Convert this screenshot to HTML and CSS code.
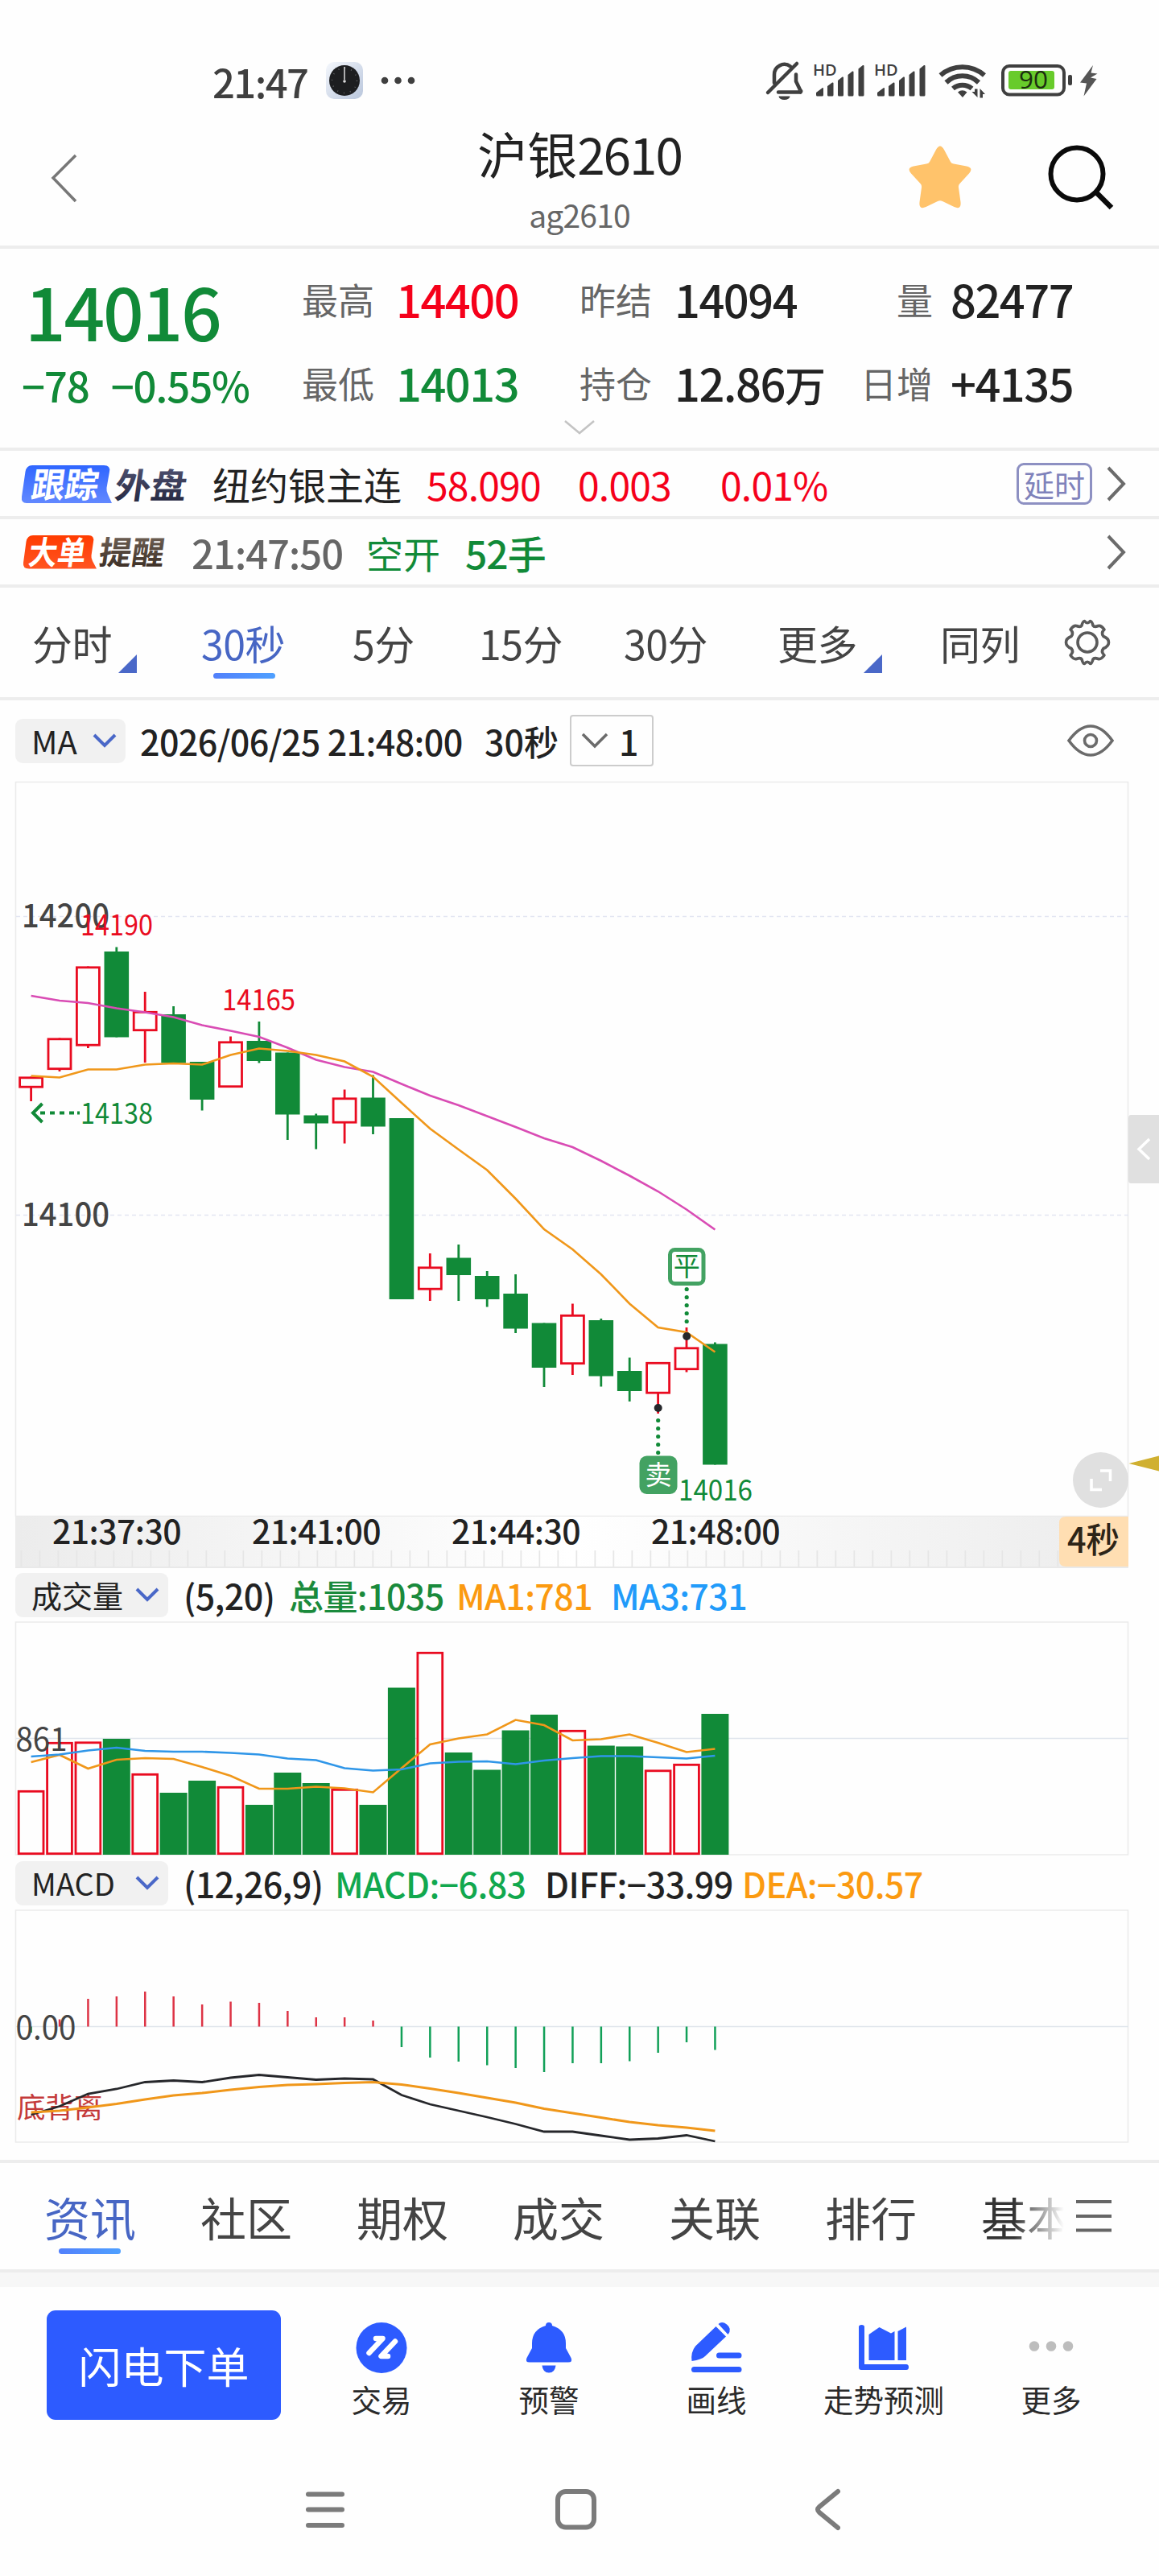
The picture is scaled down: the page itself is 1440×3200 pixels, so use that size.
FILE: index.html
```html
<!DOCTYPE html>
<html lang="zh-CN">
<head>
<meta charset="utf-8">
<title>沪银2610</title>
<link rel="stylesheet" href="styles.css">
</head>
<body>
<div class="phone">
  <div class="status">
    <span class="clock">21:47</span>
    <svg class="dial" width="46" height="46" viewBox="0 0 46 46"><defs><linearGradient id="dialbg" x1="0" y1="0" x2="1" y2="1"><stop offset="0" stop-color="#f4f7fc"/><stop offset="1" stop-color="#b9c6dc"/></linearGradient></defs><rect width="46" height="46" rx="10" fill="url(#dialbg)"/><circle cx="23" cy="23" r="19" fill="#1d1e20"/><circle cx="23" cy="23" r="15.500" fill="none" stroke="#66686b" stroke-width="1.500" stroke-dasharray="1 7.100"/><path d="M23 6V22" stroke="#ddd" stroke-width="1.500"/><circle cx="23" cy="24" r="1.800" fill="#ddd"/></svg>
    <svg class="dots" width="46" height="12" viewBox="0 0 46 12" fill="#3f3f3f"><circle cx="6" cy="6" r="4.300"/><circle cx="22.500" cy="6" r="4.300"/><circle cx="39" cy="6" r="4.300"/></svg>
    <svg class="signals" width="430" height="60" viewBox="945 70 430 60" fill="#3f3f3f">
      <g fill="none" stroke="#3f3f3f" stroke-width="4.500" stroke-linecap="round" stroke-linejoin="round"><path d="M962 103V93a12.500 12.500 0 0 1 20-10.500M989 92.500V101l5.500 11.500a1 1 0 0 1-1 2H967"/><path d="M954 115L990 79"/></g>
      <path d="M967.500 119.500h14a7 4.500 0 0 1-14 0z"/>
      <g id="cell">
        <text x="1010" y="94" class="hd">HD</text>
        <path d="M1014 115l8-6q1-.5 1 1v8q0 1.500-1.500 1.500h-6q-1.500 0-1.500-1.500zM1028 107l6-4.500q1.500-.5 1.500 1v14.500q0 1.500-1.500 1.500h-4.500q-1.500 0-1.500-1.500zM1041 100l5.500-4.500q1.500-.5 1.500 1v21.500q0 1.500-1.500 1.500h-4q-1.500 0-1.500-1.500zM1053.500 93l5.500-4.500q1.500-.5 1.500 1v28.500q0 1.500-1.500 1.500h-4q-1.500 0-1.500-1.500zM1066.500 85.500l5.500-4.500q1.500-.5 1.500 1v36q0 1.500-1.500 1.500h-4q-1.500 0-1.500-1.500z"/>
      </g>
      <use href="#cell" x="76"/>
      <g fill="none" stroke="#3f3f3f" stroke-width="6"><path d="M1168.500 93.500A41 41 0 0 1 1223 93.500"/><path d="M1175.500 102.500A29 29 0 0 1 1216 102.500"/><path d="M1184 110A18 18 0 0 1 1207.500 110"/></g>
      <path d="M1190 114.500Q1195.500 110 1201.500 114.500L1196 121z"/>
      <path d="M1211 110.500h3.500V121l-7-7h3.500zM1217.500 121.500V110l6.500 7h-3v4.500z"/>
      <rect x="1246" y="82" width="76" height="35.500" rx="8" fill="none" stroke="#3f3f3f" stroke-width="4"/>
      <rect x="1253" y="88" width="57" height="23" rx="3" fill="#68cb2b"/>
      <rect x="1327" y="93" width="5" height="13" rx="2"/>
      <text x="1266" y="110" class="pct" textLength="36" lengthAdjust="spacingAndGlyphs">90</text>
      <path d="M1358 81L1342 102.500L1350 103.500L1346.500 119.500L1362.500 98L1355 96.500L1363.500 91.500L1355.500 90.500z" fill="#555"/>
    </svg>
  </div>

  <header class="head">
    <svg class="back" width="40" height="70" viewBox="60 186 40 70" fill="none" stroke="#777" stroke-width="3.500"><path d="M94 193L66 221L94 250"/></svg>
    <div class="title"><h1>沪银<span>2610</span></h1><p>ag2610</p></div>
    <svg width="84" height="84" viewBox="0 0 84 84" class="star"><path d="M37 8Q42-1 47 8l8 15q1 2 4 2.500l16 3q9 2 3 9L66.500 50q-2 2-1.500 5l2.500 18q1 10-8 6L45 72q-3-1.500-6 0l-14.500 7q-9 4-8-6L19 55q.5-3-1.500-5L6 37.500q-6-7 3-9l16-3q3-.5 4-2.500z" fill="#ffc36b"/></svg>
    <svg width="84" height="84" viewBox="1300 178 84 84" class="find" fill="none" stroke="#0a0a0a"><circle cx="1338" cy="216" r="32.500" stroke-width="6"/><path d="M1362 239L1381 258" stroke-width="6.500"/></svg>
  </header>

  <section class="quote">
    <div class="last"><div class="price">14016</div><div class="chg"><span>−78</span><span>−0.55%</span></div></div>
    <div class="stats">
      <label>最高</label><b class="up">14400</b><label>昨结</label><b>14094</b><label class="r">量</label><b class="v">82477</b>
      <label>最低</label><b class="down">14013</b><label>持仓</label><b>12.86<i>万</i></b><label class="r">日增</label><b class="v">+4135</b>
    </div>
    <svg class="more" width="40" height="20" viewBox="0 0 40 20" fill="none" stroke="#c4c4c4" stroke-width="2.500"><path d="M2 2L20 17L38 2"/></svg>
  </section>

  <section class="line track">
    <svg class="badge" width="216" height="56" viewBox="22 572 216 56">
      <defs><linearGradient id="bl" x1="0" y1="0" x2="0" y2="1"><stop offset="0" stop-color="#2f66ff"/><stop offset="1" stop-color="#6288ff"/></linearGradient><linearGradient id="ink" x1="0" y1="0" x2="0" y2="1"><stop offset="0" stop-color="#585a7c"/><stop offset="1" stop-color="#20233a"/></linearGradient></defs>
      <path d="M40 577H129Q137.500 577 136 585L132.500 605Q132 609 134 613L139 624H33Q26 624 27 616L31.500 585Q33 577 40 577z" fill="url(#bl)"/>
      <g class="btxt"><text transform="translate(37.500 616.500) skewX(-8)" fill="#fff" textLength="83" lengthAdjust="spacingAndGlyphs">跟踪</text><text transform="translate(141 617.500) skewX(-8)" fill="url(#ink)" textLength="89" lengthAdjust="spacingAndGlyphs">外盘</text></g>
    </svg>
    <span class="name">纽约银主连</span><span class="q1">58.090</span><span class="q2">0.003</span><span class="q3">0.01%</span>
    <span class="delay">延时</span>
    <svg class="go" width="26" height="44" viewBox="0 0 26 44"><path d="M3 2L22 22L3 42"/></svg>
  </section>

  <section class="line big">
    <svg class="badge" width="216" height="56" viewBox="22 658 216 56">
      <defs><linearGradient id="rd" x1="0" y1="0" x2="0" y2="1"><stop offset="0" stop-color="#ff3c00"/><stop offset="1" stop-color="#ff5422"/></linearGradient><linearGradient id="br" x1="0" y1="0" x2="0" y2="1"><stop offset="0" stop-color="#7b6c60"/><stop offset="1" stop-color="#33261d"/></linearGradient></defs>
      <path d="M41 665H110Q117.500 665 116 673L113.500 690Q113 693 115 697L120 706.500H36Q28 706.500 29 699L32.500 673Q34 665 41 665z" fill="url(#rd)"/>
      <g class="btxt b2"><text transform="translate(34 700.500) skewX(-8)" fill="#fff" textLength="71" lengthAdjust="spacingAndGlyphs">大单</text><text transform="translate(121.500 701) skewX(-8)" fill="url(#br)" textLength="81" lengthAdjust="spacingAndGlyphs">提醒</text></g>
    </svg>
    <span class="at">21:47:50</span><span class="side">空开</span><span class="lots">52手</span>
    <svg class="go" width="26" height="44" viewBox="0 0 26 44"><path d="M3 2L22 22L3 42"/></svg>
  </section>

  <nav class="periods">
    <span class="p1">分时<svg width="23" height="23" viewBox="0 0 23 23"><path d="M23 0V23H0z"/></svg></span>
    <span class="p2 on">30秒</span><span class="p3">5分</span><span class="p4">15分</span><span class="p5">30分</span>
    <span class="p6">更多<svg width="23" height="23" viewBox="0 0 23 23"><path d="M23 0V23H0z"/></svg></span>
    <span class="p7">同列</span>
    <svg class="gear" width="58" height="58" viewBox="-29 -29 58 58" fill="none" stroke="#5a5a5a" stroke-width="3.600" stroke-linejoin="round"><circle r="12"/><path d="M-7-21Q-5.500-26.500-3.500-26.500Q0-22 3.500-26.500Q5.500-26.500 7-21Q8.500-18.500 13.500-20.500Q17-21.500 21-16Q16.500-11.500 20-7.500Q26.500-5 26.500 0Q26.500 5 20 7.500Q16.500 11.500 21 16Q17 21.500 13.500 20.500Q8.500 18.500 7 21Q5.500 26.500 3.500 26.500Q0 22-3.500 26.500Q-5.500 26.500-7 21Q-8.500 18.500-13.500 20.500Q-17 21.500-21 16Q-16.500 11.500-20 7.500Q-26.500 5-26.500 0Q-26.500-5-20-7.500Q-16.500-11.500-21-16Q-17-21.500-13.500-20.500Q-8.500-18.500-7-21z"/></svg>
  </nav>

  <div class="legend main">
    <span class="pill ma">MA<svg width="30" height="18" viewBox="0 0 30 18"><path d="M2 2L15 15L28 2"/></svg></span>
    <span class="stamp">2026/06/25 21:48:00</span><span class="unit">30秒</span>
    <span class="count"><svg width="34" height="20" viewBox="0 0 34 20" fill="none" stroke="#6b6b6b" stroke-width="3.500"><path d="M2 2L17 17L32 2"/></svg>1</span>
    <svg class="eye" width="60" height="44" viewBox="-30 -22 60 44" fill="none" stroke="#6b6b6b" stroke-width="3.600"><path d="M-27 0Q-14-18 0-18Q14-18 27 0Q14 18 0 18Q-14 18-27 0z"/><circle r="7.500"/></svg>
  </div>

  <svg class="chart" width="1440" height="978" viewBox="0 970 1440 978">
    <defs><linearGradient id="strip"><stop offset="0" stop-color="#ececec"/><stop offset=".5" stop-color="#fff"/><stop offset="1" stop-color="#ececec"/></linearGradient></defs>
    <rect x="19.500" y="971.500" width="1382" height="912" class="frame"/>
    <path d="M20 1138.500H1402M20 1509.500H1402" stroke="#e3e6f2" stroke-width="1.500" stroke-dasharray="5 4" fill="none"/>
    <g id="candles"></g>
    <g class="axis"><text x="27" y="1152" textLength="109" lengthAdjust="spacingAndGlyphs">14200</text><text x="27" y="1522.500" textLength="109" lengthAdjust="spacingAndGlyphs">14100</text></g>
    <g class="mark"><text x="100" y="1162" class="u" textLength="90" lengthAdjust="spacingAndGlyphs">14190</text><text x="276" y="1255" class="u" textLength="91" lengthAdjust="spacingAndGlyphs">14165</text><text x="100" y="1396" class="d" textLength="90" lengthAdjust="spacingAndGlyphs">14138</text><text x="843" y="1864" class="d" textLength="92" lengthAdjust="spacingAndGlyphs">14016</text></g>
    <path d="M52 1371L41 1382.500L52 1394M50 1382.500H99" fill="none" stroke="#118a38" stroke-width="4" id="arrow"/>
    <rect x="832.500" y="1552.500" width="41.500" height="42" rx="6" class="flat"/><text x="853.200" y="1584.500" class="tag d">平</text>
    <rect x="794.500" y="1808.500" width="47" height="47.500" rx="9" fill="#43a262"/><text x="818" y="1843.500" class="tag w">卖</text>
    <g fill="none" stroke="#118a38" stroke-width="5.200" stroke-linecap="round" stroke-dasharray="0 10"><path d="M853.200 1601.500V1643"/><path d="M817.700 1764.500V1806"/></g>
    <g fill="#26272b"><circle cx="853.200" cy="1660" r="5"/><circle cx="817.700" cy="1749" r="5"/></g>
    <circle cx="1367.500" cy="1838.500" r="34.500" fill="#e0e0e0"/><path d="M1367 1827H1379.500V1840M1356 1837V1850.500H1369" fill="none" stroke="#fff" stroke-width="3.600"/>
    <path d="M1440 1385H1405Q1402 1385 1402 1389V1466Q1402 1470 1405 1470H1440z" fill="#e0e0e0"/><path d="M1428 1415L1415 1427.500L1428 1440" fill="none" stroke="#fff" stroke-width="3.500"/>
    <path d="M1402.500 1818L1440 1808.500V1827.500z" fill="#d0b030"/>
    <rect x="19" y="1884" width="1383" height="63" fill="url(#strip)"/>
    <path d="M25.500 1936.500H1316" stroke="#e6e6e6" stroke-width="21" stroke-dasharray="1.700 21.300" fill="none"/><path d="M19 1947H1402" stroke="#e9e9e9" stroke-width="2"/>
    <g class="times"><text x="145" y="1918">21:37:30</text><text x="393" y="1918">21:41:00</text><text x="641" y="1918">21:44:30</text><text x="889" y="1918">21:48:00</text></g>
    <path d="M1402 1884H1324Q1316 1884 1316 1892V1938Q1316 1946 1324 1946H1402z" fill="#ffdeb2"/><text x="1326" y="1929" class="left" textLength="65" lengthAdjust="spacingAndGlyphs">4秒</text>
  </svg>

  <div class="legend vol">
    <span class="pill">成交量<svg width="30" height="18" viewBox="0 0 30 18"><path d="M2 2L15 15L28 2"/></svg></span>
    <span class="a1">(5,20)</span><span class="a2 gr">总量:1035</span><span class="a3 or">MA1:781</span><span class="a4 bu">MA3:731</span>
  </div>
  <svg class="chart" width="1440" height="292" viewBox="0 2014 1440 292">
    <path d="M19.500 2304V2015H1401.500V2304z" class="frame"/><path d="M20 2159.500H1402" stroke="#dfe5ec" stroke-width="1.500"/>
    <g id="volume"></g>
    <text x="19.500" y="2175" class="ax2" textLength="64" lengthAdjust="spacingAndGlyphs">861</text>
  </svg>

  <div class="legend macd">
    <span class="pill">MACD<svg width="30" height="18" viewBox="0 0 30 18"><path d="M2 2L15 15L28 2"/></svg></span>
    <span class="a1">(12,26,9)</span><span class="a2 g2">MACD:−6.83</span><span class="a3">DIFF:−33.99</span><span class="a4 or">DEA:−30.57</span>
  </div>
  <svg class="chart" width="1440" height="311" viewBox="0 2372 1440 311">
    <rect x="19.500" y="2373" width="1382" height="288" class="frame"/><path d="M20 2517.500H1402" stroke="#dfe5ec" stroke-width="1.500"/>
    <g id="macd"></g>
    <text x="19.500" y="2533" class="ax2" textLength="75" lengthAdjust="spacingAndGlyphs">0.00</text>
    <text x="21" y="2631" class="diverge">底背离</text>
    <g id="macdlines"></g>
  </svg>

  <nav class="tabs">
    <span class="on">资讯</span><span>社区</span><span>期权</span><span>成交</span><span>关联</span><span>排行</span><span class="fade">基本</span>
    <svg width="46" height="42" viewBox="0 0 46 42" stroke="#666" stroke-width="4"><path d="M1 3H45M1 21H45M1 38.500H45"/></svg>
  </nav>

  <footer class="actions">
    <button>闪电下单</button>
    <div class="act"><svg width="66" height="66" viewBox="441 2883 66 66"><circle cx="474" cy="2916.500" r="31.500" fill="#2d5bff"/><path d="M467 2905H475.500L458.500 2923M491 2908.500L473.500 2927H482" fill="none" stroke="#fff" stroke-width="6.500" stroke-linecap="round" stroke-linejoin="round"/></svg>交易</div>
    <div class="act"><svg width="66" height="66" viewBox="649 2883 66 66" fill="#2d5bff"><path d="M678 2889Q678 2885 682 2885Q686 2885 686 2889Q703 2894 703 2911V2917L709.500 2929Q712 2934.500 706 2934.500H658Q652 2934.500 654.500 2929L661 2917V2911Q661 2894 678 2889zM673.500 2938.500H690.500Q689.500 2947.500 682 2947.500Q674.500 2947.500 673.500 2938.500z"/></svg>预警</div>
    <div class="act"><svg width="66" height="66" viewBox="857 2883 66 66" fill="#2d5bff"><path d="M889.500 2890L902 2902.500L876 2927Q872 2931 859.500 2933Q858 2922 864 2914.500zM892.500 2887Q897 2883 903 2887.500Q910 2893 904.500 2900z"/><path d="M893.500 2926H918M862.500 2943.500H918" stroke="#2d5bff" stroke-width="7" stroke-linecap="round"/></svg>画线</div>
    <div class="act"><svg width="66" height="66" viewBox="1065 2883 66 66" fill="#2d5bff"><path d="M1067 2890.500Q1067 2888 1070.500 2888Q1074 2888 1074 2890.500V2937H1126Q1129 2937 1129 2940.500Q1129 2944 1126 2944H1070Q1067 2944 1067 2941zM1079.500 2900L1092.500 2891L1107 2898.500L1111.500 2896V2932H1079.500zM1115.500 2896L1126 2890.500V2932H1115.500z"/></svg>走势预测</div>
    <div class="act"><svg width="66" height="66" viewBox="1273 2883 66 66" fill="#bdbdbd"><circle cx="1285" cy="2914.500" r="6.300"/><circle cx="1306" cy="2914.500" r="6.300"/><circle cx="1327" cy="2914.500" r="6.300"/></svg>更多</div>
  </footer>

  <div class="sysnav">
    <svg width="56" height="56" viewBox="376 3089 56 56" stroke="#7b7b7b" stroke-width="6" stroke-linecap="round"><path d="M383 3098.500H425M383 3117.500H425M383 3137H425"/></svg>
    <svg width="56" height="56" viewBox="688 3089 56 56" fill="none" stroke="#7b7b7b" stroke-width="6"><rect x="693" y="3095" width="45" height="44.500" rx="10"/></svg>
    <svg width="56" height="56" viewBox="1000 3089 56 56" fill="none" stroke="#7b7b7b" stroke-width="6" stroke-linecap="round"><path d="M1041 3095L1018 3114Q1014 3117.500 1018 3121L1041 3140"/></svg>
  </div>
</div>
<script src="charts.js"></script>
</body>
</html>
```
FILE: styles.css
```css
* { box-sizing: border-box; }
body { margin: 0; background: #fefefe; font-family: "Noto Sans CJK SC", "Noto Sans", sans-serif; color: #222; line-height: 1; }
h1, p { margin: 0; font-weight: 400; }
svg { display: block; flex: none; }
.phone { width: 1440px; height: 3200px; display: flex; flex-direction: column; overflow: hidden; }
.phone > * { flex: none; }

.status { height: 150px; padding: 0 65px 0 264px; display: flex; align-items: center; padding-top: 50px; }
.clock { font-size: 49px; font-weight: 500; letter-spacing: -1.6px; color: #3f3f3f; width: 141px; }
.dots { margin-left: 21px; }
.signals { margin-left: auto; }
.hd { font: 600 20px "Open Sans", sans-serif; }
.pct { font: 500 31px "Open Sans", sans-serif; fill: #1c2e10; }

.head { height: 159px; border-bottom: 4px solid #ededed; display: grid; grid-template-columns: 60px 1fr 84px 92px 84px 56px; }
.back { grid-column: 1; margin: 36px 0 0 60px; }
.title { grid-column: 1 / -1; grid-row: 1; text-align: center; padding-top: 9px; }
.title h1 { font-size: 62px; color: #222; }
.title h1 span { letter-spacing: -2px; }
.title p { margin-top: 26px; font-size: 39px; letter-spacing: -.8px; color: #666; }
.head svg { grid-row: 1; }
.star { grid-column: 3; margin: 28px 0 0 0; transform: translateX(2px); }
.find { grid-column: 5; margin: 28px 0 0; }

.quote { height: 251px; border-bottom: 4px solid #ededed; display: grid; grid-template-columns: 375px 1fr; grid-template-rows: 208px 20px; padding-top: 10px; }
.last { color: #118a38; padding-top: 22px; font-weight: 500; }
.price { font-size: 89px; letter-spacing: -2.200px; padding-left: 31px; }
.chg { display: flex; gap: 27px; font-size: 51px; letter-spacing: -1.200px; margin-top: 23px; padding-left: 27px; }
.stats { display: grid; grid-template-columns: 117px 228px 118px 222px 99px 1fr; grid-template-rows: 104px 104px; align-items: center; }
.stats label { font-size: 45px; color: #666; }
.stats .r { text-align: right; }
.stats b { font-size: 56px; font-weight: 500; letter-spacing: -1.500px; }
.stats i { font-style: normal; font-size: 51px; }
.stats .v { padding-left: 22px; }
.up { color: #f5001a; }
.down { color: #118a38; }
.more { grid-column: 1 / -1; justify-self: center; margin-top: -6px; }

.line { height: 85px; border-bottom: 4px solid #ededed; display: flex; align-items: center; padding-left: 22px; }
.btxt { font-size: 43px; font-weight: 700; }
.b2 { font-size: 40px; }
.name { font-size: 47px; width: 266px; margin-left: 26px; }
.track .q1, .track .q2, .track .q3 { color: #f5001a; font-size: 48px; letter-spacing: -.8px; }
.q1 { width: 188px; }
.q2 { width: 177px; }
.delay { margin-left: auto; width: 94px; height: 52px; border: 3px solid #8d90c2; border-radius: 9px; color: #7f82bb; font-size: 38px; display: flex; align-items: center; justify-content: center; }
.go { fill: none; stroke: #6b6b6b; stroke-width: 4; margin: 0 40px 0 17px; }
.at { font-size: 49px; font-weight: 500; letter-spacing: -1.100px; color: #666; width: 217px; }
.side { font-size: 46px; color: #118a38; width: 123px; }
.lots { font-size: 48px; color: #118a38; font-weight: 500; letter-spacing: -1px; }
.big .go { margin-left: auto; }

.periods { height: 140px; border-bottom: 4px solid #ededed; display: grid; grid-template-columns: 40px 210px 188px 157px 180px 191px 202px 153px 1fr; grid-template-rows: 136px; align-items: center; font-size: 50px; color: #444; }
.periods > * { grid-row: 1; position: relative; letter-spacing: -.5px; }
.periods svg { fill: #4a68c8; }
.periods span svg { display: inline-block; margin-left: 8px; transform: translateY(16px); }
.p1 { grid-column: 2; }
.p2 { grid-column: 3; }
.p3 { grid-column: 4; }
.p4 { grid-column: 5; }
.p5 { grid-column: 6; }
.p6 { grid-column: 7; }
.p7 { grid-column: 8; }
.periods .gear { grid-column: 9; margin-left: 1px; fill: none; }
.periods .on { color: #4766c4; }
.on::after { content: ""; position: absolute; height: 7px; width: 77px; border-radius: 4px; background: linear-gradient(90deg, #5280fb, #4fa0ff); }
.periods .on::after { left: 15px; top: 63px; }

.legend { display: flex; align-items: center; padding-left: 19px; font-size: 43px; }
.pill { height: 55px; width: 190px; border-radius: 9px; background: #f1f1f1; padding: 0 11px 0 20px; font-size: 38px; display: flex; align-items: center; justify-content: space-between; }
.pill svg { fill: none; stroke: #4a68c8; stroke-width: 4; }
.legend.main { height: 100px; font-weight: 500; }
.pill.ma { width: 137px; font-size: 40px; font-weight: 400; }
.stamp { margin-left: 18px; width: 428px; letter-spacing: -.6px; white-space: nowrap; }
.unit { width: 106px; }
.count { width: 104px; height: 64px; border: 2px solid #ccc; border-radius: 4px; display: flex; align-items: center; gap: 13px; padding-left: 12px; }
.eye { margin-left: 513px; }
.chart { overflow: visible; }
.frame { fill: none; stroke: #ebebeb; stroke-width: 1.500; }
.axis, .ax2 { font-size: 40px; fill: #444; }
.axis { font-weight: 500; }
.mark { font-size: 35.500px; }
.u { fill: #e90b20; }
.d { fill: #118a38; }
.w { fill: #fff; }
.tag { font-size: 33px; text-anchor: middle; }
.flat { fill: #fefefe; stroke: #43a262; stroke-width: 5; }
.times { font-size: 41px; font-weight: 500; text-anchor: middle; letter-spacing: -.6px; fill: #222; }
.left { font-size: 43px; font-weight: 500; fill: #2d2417; }
.diverge { font-size: 35.500px; fill: #c43a3a; }

.vol, .macd { font-weight: 500; }
.vol .pill, .macd .pill { font-weight: 400; }
.vol { height: 66px; }
.macd { height: 66px; }
.legend .a1, .legend .a2, .legend .a3, .legend .a4 { white-space: nowrap; letter-spacing: -.6px; }
.a1 { margin-left: 19px; width: 131px; }
.vol .a2 { width: 208px; }
.vol .a3 { width: 192px; }
.macd .a1 { width: 188px; }
.macd .a2 { width: 261px; }
.macd .a3 { width: 245px; }
.gr { color: #1a8a3c; }
.g2 { color: #11a84e; }
.or { color: #fb9a10; }
.bu { color: #219bfa; }

.tabs { height: 140px; border-top: 4px solid #ededed; border-bottom: 4px solid #ededed; display: flex; align-items: center; padding-left: 55px; font-size: 57px; color: #444; }
.tabs span { width: 194px; position: relative; }
.tabs .on { color: #4766c4; }
.tabs .on::after { left: 18px; top: 68px; }
.tabs .fade { width: 117px; background: linear-gradient(90deg, #333 35%, rgba(255,255,255,0) 88%); background-clip: text; -webkit-background-clip: text; color: transparent; }
.actions { height: 218px; border-top: 18px solid #f7f7f7; display: flex; padding-left: 58px; }
.actions button { width: 291px; height: 136px; margin: 29px 21px 0 0; padding: 0; border: 0; border-radius: 11px; background: #2d5bff; color: #fff; font: 400 53px/1 "Noto Sans CJK SC", sans-serif; }
.act { width: 208px; padding-top: 42px; display: flex; flex-direction: column; align-items: center; gap: 12px; font-size: 37.500px; color: #2a2a2a; }
.sysnav { height: 159px; display: flex; gap: 256px; padding: 48px 0 0 376px; }
```
FILE: charts.js
```js
var X0 = 38.6, STEP = 35.41;
var RED = '#e90b20', GREEN = '#118a38';
function cx(i) { return X0 + STEP * i; }
function rect(x, y, w, h, a) { return '<rect x="' + x.toFixed(1) + '" y="' + y + '" width="' + w + '" height="' + h + '" ' + a + '/>'; }
function line(vals, color, w) {
  return '<polyline fill="none" stroke="' + color + '" stroke-width="' + w + '" points="' +
    vals.map(function (v, i) { return cx(i).toFixed(1) + ',' + v; }).join(' ') + '"/>';
}

// colour, body top, body bottom, high, low
var candles = [
  ['r',1337.5,1351.5,1337.5,1368],['r',1289.5,1329,1289.5,1331],['r',1200.5,1299.5,1200.5,1302],['g',1182,1288.5,1176.5,1288.5],
  ['r',1256,1281,1232,1320],['g',1260,1320.5,1250,1320.5],['g',1319,1366,1319,1379.5],['r',1293.5,1351,1287.5,1351],
  ['g',1293,1318,1269,1320.5],['g',1307.5,1384.5,1307.5,1416],['g',1385.5,1395.5,1383.5,1427.5],['r',1363.5,1395.5,1353.5,1420.5],
  ['g',1363.5,1399.5,1335.5,1409],['g',1389,1614,1389,1614],['r',1573.5,1602.5,1557,1616],['g',1562.5,1584,1546,1616],
  ['g',1585,1614,1579,1623.5],['g',1607,1650.5,1583,1656],['g',1643.5,1699,1643.5,1723],['r',1633,1695,1619.5,1708],
  ['g',1640,1709.5,1638,1722.5],['g',1703,1728,1686.5,1741],['r',1692,1731.5,1692,1756],['r',1673.5,1702,1649,1704.5],
  ['g',1669.5,1819.5,1667.5,1819.5]
];
var pink = [1237,1243,1246,1252.5,1257.5,1263.5,1273.5,1280.5,1288,1301.5,1316.5,1325.5,1331.5,1346.5,1361,1373,1386.5,1400,1414,1425,1442,1460.5,1480,1502.5,1527.5];
var amber = [1336.5,1338.5,1328.5,1328.5,1322.5,1321,1322.5,1310.5,1302.5,1305.5,1310.5,1318.5,1337.5,1370,1402,1428,1453.5,1489,1527,1552,1583,1619.5,1649,1655,1679.5];
document.getElementById('candles').innerHTML = candles.map(function (c, i) {
  var x = cx(i), col = c[0] === 'r' ? RED : GREEN;
  var wick = rect(x - 1.4, c[3], 2.8, c[4] - c[3], 'fill="' + col + '"');
  return wick + (c[0] === 'r'
    ? rect(x - 14, c[1] + 1.3, 28, c[2] - c[1] - 2.6, 'fill="#fefefe" stroke="' + RED + '" stroke-width="2.8"')
    : rect(x - 15.3, c[1], 30.6, c[2] - c[1], 'fill="' + GREEN + '"'));
}).join('') + line(pink, '#d94cb4', 2.6) + line(amber, '#f0971a', 2.6);

// dashes of the low-price pointer
document.getElementById('arrow').setAttribute('d', 'M52.500 1371L41 1382.500L52.500 1394M50 1382.500h6M62 1382.500h6M74 1382.500h6M86 1382.500h6M96 1382.500h3');

var vols = [2224,2164,2163.5,2160,2203,2227,2212,2219,2242,2202,2215,2222,2242,2096.5,2052,2177,2198.5,2149.5,2130,2149,2168.5,2169.5,2198.5,2191,2129];
var vAmber = [2189,2180,2197,2186,2184,2185,2195,2206,2222,2222,2219.5,2221.5,2226.5,2196.5,2167,2159.5,2154.5,2136.5,2143,2162,2160.5,2154.5,2165,2176.5,2172.5];
var vBlue = [2182,2179.5,2174.5,2171,2175,2176,2176,2177.5,2179.5,2184.5,2186.5,2196.5,2199.5,2198,2190.5,2188.5,2188,2191.5,2187,2184,2181.5,2181.5,2183,2184.5,2181];
document.getElementById('volume').innerHTML = vols.map(function (t, i) {
  var x = cx(i);
  return candles[i][0] === 'r'
    ? rect(x - 15.4, t + 1.3, 30.8, 2304 - t - 2.6, 'fill="#fefefe" stroke="' + RED + '" stroke-width="2.8"')
    : rect(x - 17, t, 34, 2304 - t, 'fill="' + GREEN + '"');
}).join('') + line(vAmber, '#f0971a', 2.6) + line(vBlue, '#2f96e8', 2.6);

var hist = [2525,2508.5,2483,2480,2474,2480,2490,2486.5,2488,2498,2506,2506,2510,2543,2556,2561,2565.5,2569,2574,2563,2563,2560.5,2550,2537,2546.5];
var diff = [2627,2616.5,2601,2595,2586.5,2584.5,2586.5,2581,2577.5,2580.5,2583.5,2582,2583,2602.5,2614,2622,2630,2638.5,2648,2648,2653,2658,2656.5,2652.5,2660];
var dea = [2624,2622,2618,2613.5,2608,2603,2600,2596,2592.5,2590,2589,2587.5,2586.5,2589.5,2594.5,2600,2606,2612,2619.5,2625,2630.5,2636,2640,2643,2647];
document.getElementById('macd').innerHTML = hist.map(function (v, i) {
  var z = 2517.5;
  return rect(cx(i) - 1.2, Math.min(v, z), 2.5, Math.abs(v - z), 'fill="' + (v < z ? '#dd3345' : '#12a058') + '"');
}).join('');
document.getElementById('macdlines').innerHTML = line(diff, '#26272b', 2.8) + line(dea, '#f0971a', 3);
```
